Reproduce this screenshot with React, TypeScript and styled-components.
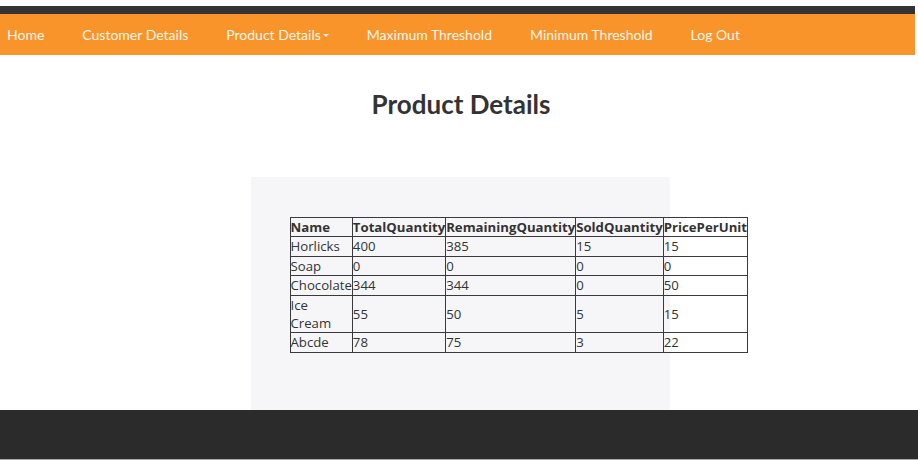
import React from 'react'
import styled, { createGlobalStyle } from 'styled-components'

const GlobalStyle = createGlobalStyle`
  html, body {
    margin: 0;
    padding: 0;
    background: #ffffff;
  }
  body {
    font-family: "Open Sans", "Liberation Sans", sans-serif;
    color: #333333;
  }
`

type Product = {
  name: string
  total: number
  remaining: number
  sold: number
  price: number
}

const products: Product[] = [
  { name: 'Horlicks', total: 400, remaining: 385, sold: 15, price: 15 },
  { name: 'Soap', total: 0, remaining: 0, sold: 0, price: 0 },
  { name: 'Chocolate', total: 344, remaining: 344, sold: 0, price: 50 },
  { name: 'Ice Cream', total: 55, remaining: 50, sold: 5, price: 15 },
  { name: 'Abcde', total: 78, remaining: 75, sold: 3, price: 22 },
]

const navItems = [
  { label: 'Home' },
  { label: 'Customer Details' },
  { label: 'Product Details', dropdown: true },
  { label: 'Maximum Threshold' },
  { label: 'Minimum Threshold' },
  { label: 'Log Out' },
]

const Page = styled.div`
  display: flex;
  flex-direction: column;
  padding-top: 6px;
`

const TopStrip = styled.div`
  height: 8px;
  margin-right: 3px;
  background: #333333;
`

const NavBar = styled.nav`
  display: flex;
  align-items: center;
  gap: 38px;
  height: 41px;
  margin-right: 3px;
  padding-left: 7px;
  background: #f8942a;
`

const NavLink = styled.a`
  display: flex;
  align-items: center;
  color: #fff6ec;
  font-family: Lato, "Open Sans", sans-serif;
  font-size: 14px;
  text-decoration: none;
  cursor: pointer;
`

const Caret = styled.span`
  display: inline-block;
  width: 0;
  height: 0;
  margin-left: 2px;
  margin-top: 2px;
  border-top: 3px solid #fff6ec;
  border-left: 3px solid transparent;
  border-right: 3px solid transparent;
`

const Title = styled.h1`
  margin: 35px 0 0;
  padding-left: 4px;
  text-align: center;
  font-family: Lato, "Open Sans", sans-serif;
  font-size: 26px;
  font-weight: 700;
  line-height: 29px;
  color: #333333;
`

const Panel = styled.section`
  align-self: center;
  width: 419px;
  height: 233px;
  margin: 58px 0 0 2px;
  padding: 40px 0 0 39px;
  box-sizing: border-box;
  background: #f6f6f8;
`

const TableWrap = styled.div`
  width: 340px;
`

const Table = styled.table`
  border-collapse: collapse;
  font-size: 13.2px;
  line-height: 18.4px;
  color: #333333;
`

const HeadCell = styled.th`
  padding: 0;
  border: 1px solid #3a3a3a;
  text-align: left;
  font-weight: 700;
`

const Cell = styled.td`
  padding: 0;
  border: 1px solid #3a3a3a;
  text-align: left;
  vertical-align: middle;
`

const Footer = styled.footer`
  height: 49px;
  background: #2b2b2b;
  border-bottom: 1px solid #a8a8a8;
`

export default function App() {
  return (
    <>
      <GlobalStyle />
      <Page>
        <TopStrip />
        <NavBar>
          {navItems.map((item) => (
            <NavLink key={item.label}>
              {item.label}
              {item.dropdown && <Caret />}
            </NavLink>
          ))}
        </NavBar>
        <Title>Product Details</Title>
        <Panel>
          <TableWrap>
            <Table>
              <thead>
                <tr>
                  <HeadCell>Name</HeadCell>
                  <HeadCell>TotalQuantity</HeadCell>
                  <HeadCell>RemainingQuantity</HeadCell>
                  <HeadCell>SoldQuantity</HeadCell>
                  <HeadCell>PricePerUnit</HeadCell>
                </tr>
              </thead>
              <tbody>
                {products.map((p) => (
                  <tr key={p.name}>
                    <Cell>{p.name}</Cell>
                    <Cell>{p.total}</Cell>
                    <Cell>{p.remaining}</Cell>
                    <Cell>{p.sold}</Cell>
                    <Cell>{p.price}</Cell>
                  </tr>
                ))}
              </tbody>
            </Table>
          </TableWrap>
        </Panel>
        <Footer />
      </Page>
    </>
  )
}
